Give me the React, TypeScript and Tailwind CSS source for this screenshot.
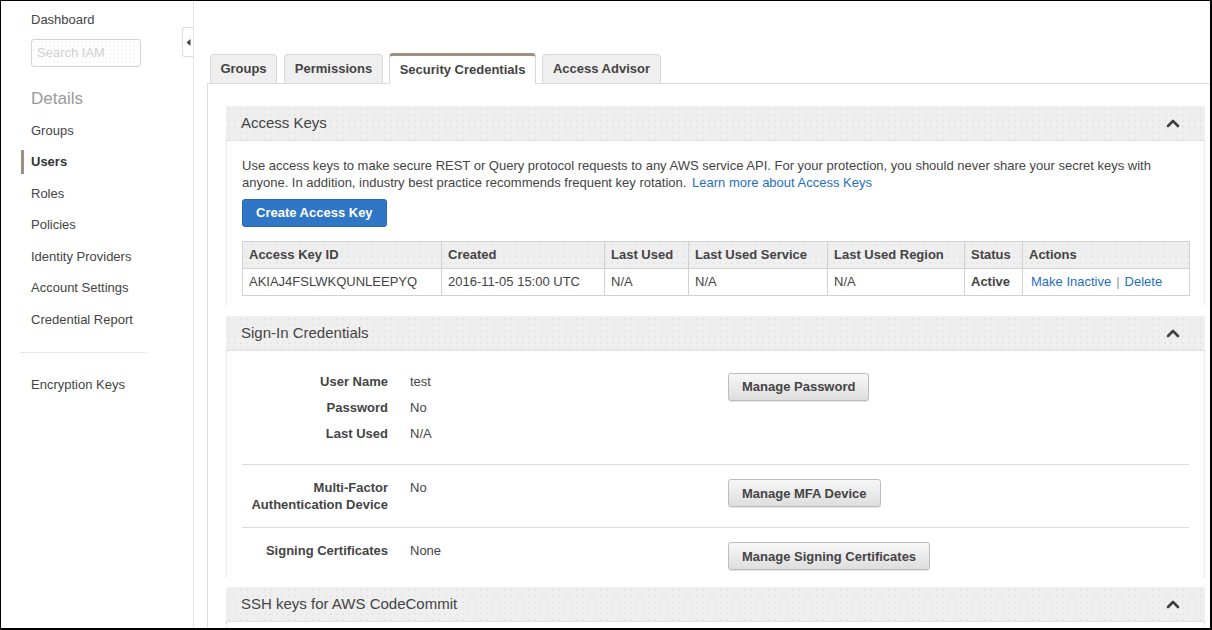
import { ReactNode } from "react";

const dots =
  "bg-[#efefef] bg-[radial-gradient(#dddddd_0.6px,transparent_0.8px)] bg-size-[6px_6px]";

const navItems = [
  "Groups",
  "Users",
  "Roles",
  "Policies",
  "Identity Providers",
  "Account Settings",
  "Credential Report",
];

function Chevron() {
  return (
    <svg width="14" height="10" viewBox="0 0 14 10" className="shrink-0">
      <polyline
        points="2,8 7,3 12,8"
        fill="none"
        stroke="#3f3f3f"
        strokeWidth="2.6"
        strokeLinecap="round"
        strokeLinejoin="round"
      />
    </svg>
  );
}

function SectionHeader({ title }: { title: string }) {
  return (
    <div
      className={`flex h-[35px] items-center justify-between border-b border-dotted border-[#d5d5d5] pl-[15px] pr-[25px] text-[15px] text-[#444] ${dots}`}
    >
      <span>{title}</span>
      <Chevron />
    </div>
  );
}

function GrayButton({ children }: { children: ReactNode }) {
  return (
    <button className="h-[28px] rounded-[3px] border border-[#bdbdbd] bg-linear-to-b from-[#f7f7f7] to-[#dedede] px-[13px] text-[13px] font-bold text-[#444] shadow-[0_1px_0_#e5e5e5]">
      {children}
    </button>
  );
}

function Sidebar() {
  return (
    <aside className="relative w-[193px] shrink-0 border-r border-[#e3e3e3] pt-[10px]">
      <div className="pl-[30px] leading-[17px]">Dashboard</div>
      <div className="mt-[11px] ml-[30px] flex h-[28px] w-[110px] items-center rounded-[3px] border border-[#d3d3d3] bg-[radial-gradient(#efefef_0.6px,transparent_0.8px)] bg-size-[4px_4px] pl-[5px] text-[#d0d0d0]">
        Search IAM
      </div>
      <div className="mt-[20px] pl-[30px] text-[17px] leading-[24px] text-[#9a9a9a]">Details</div>
      <nav className="mt-[4px] flex flex-col">
        {navItems.map((item) => (
          <div key={item} className="flex h-[31.5px] items-center">
            <span
              className={`ml-[20px] border-l-[3px] pl-[7px] leading-[24px] ${
                item === "Users" ? "border-[#a28f80] font-bold text-[#333]" : "border-transparent"
              }`}
            >
              {item}
            </span>
          </div>
        ))}
      </nav>
      <div className="mt-[16px] ml-[20px] w-[125px] border-t border-dotted border-[#d5d5d5]" />
      <div className="mt-[23px] pl-[30px] leading-[17px]">Encryption Keys</div>
      <div className="absolute top-[26px] right-0 flex h-[30px] w-[11px] items-center justify-center rounded-l-[3px] border border-r-0 border-[#dcdcdc] bg-white">
        <svg width="5" height="7" viewBox="0 0 5 7">
          <polygon points="4.5,0 0.5,3.5 4.5,7" fill="#444" />
        </svg>
      </div>
    </aside>
  );
}

function Tabs() {
  const tabs = [
    { label: "Groups", w: "w-[67px]", m: "" },
    { label: "Permissions", w: "w-[99px]", m: "ml-[7px]" },
    { label: "Security Credentials", w: "w-[147px]", m: "ml-[6px]", active: true },
    { label: "Access Advisor", w: "w-[119px]", m: "ml-[6px]" },
  ];
  return (
    <div className="flex items-end pl-[3px]">
      {tabs.map((t) =>
        t.active ? (
          <div
            key={t.label}
            className={`${t.w} ${t.m} relative -mb-px flex h-[31px] items-center justify-center rounded-t-[4px] border border-b-0 border-t-[3px] border-[#d8d8d8] border-t-[#a28f80] bg-white font-bold text-[#444]`}
          >
            {t.label}
          </div>
        ) : (
          <div
            key={t.label}
            className={`${t.w} ${t.m} flex h-[29px] items-center justify-center rounded-t-[4px] border border-b-0 border-[#d8d8d8] bg-[#efefef] font-bold text-[#444]`}
          >
            {t.label}
          </div>
        )
      )}
    </div>
  );
}

function AccessKeysTable() {
  const head = [
    "Access Key ID",
    "Created",
    "Last Used",
    "Last Used Service",
    "Last Used Region",
    "Status",
    "Actions",
  ];
  const widths = ["w-[199px]", "w-[163px]", "w-[84px]", "w-[139px]", "w-[137px]", "w-[58px]", "w-[167px]"];
  return (
    <table className="mt-[14px] w-[947px] table-fixed border-collapse">
      <colgroup>
        {widths.map((w, i) => (
          <col key={i} className={w} />
        ))}
      </colgroup>
      <thead>
        <tr className={dots}>
          {head.map((h) => (
            <th key={h} className="h-[27px] border border-[#d2d2d2] px-[6px] text-left font-bold text-[#444]">
              {h}
            </th>
          ))}
        </tr>
      </thead>
      <tbody>
        <tr>
          <td className="h-[27px] border border-[#d2d2d2] px-[6px]">AKIAJ4FSLWKQUNLEEPYQ</td>
          <td className="border border-[#d2d2d2] px-[6px]">2016-11-05 15:00 UTC</td>
          <td className="border border-[#d2d2d2] px-[6px]">N/A</td>
          <td className="border border-[#d2d2d2] px-[6px]">N/A</td>
          <td className="border border-[#d2d2d2] px-[6px]">N/A</td>
          <td className="border border-[#d2d2d2] px-[6px] font-bold">Active</td>
          <td className="border border-[#d2d2d2] px-[8px]">
            <span className="text-[#1f6fc0]">Make Inactive</span>
            <span className="mx-[5px] text-[#999]">|</span>
            <span className="text-[#1f6fc0]">Delete</span>
          </td>
        </tr>
      </tbody>
    </table>
  );
}

function InfoRow({ label, value }: { label: ReactNode; value: string }) {
  return (
    <div className="flex">
      <div className="w-[146px] text-right font-bold text-[#444]">{label}</div>
      <div className="ml-[22px]">{value}</div>
    </div>
  );
}

function SignInCredentials() {
  return (
    <div className="px-[15px]">
      <div className="flex border-b border-[#dcdcdc] pt-[18px] pb-[17px]">
        <div className="flex w-[486px] flex-col leading-[26px]">
          <InfoRow label="User Name" value="test" />
          <InfoRow label="Password" value="No" />
          <InfoRow label="Last Used" value="N/A" />
        </div>
        <div className="mt-[4px]">
          <GrayButton>Manage Password</GrayButton>
        </div>
      </div>
      <div className="flex border-b border-[#dcdcdc] pt-[14px] pb-[14px] leading-[17px]">
        <div className="w-[486px]">
          <InfoRow
            label={
              <>
                Multi-Factor
                <br />
                Authentication Device
              </>
            }
            value="No"
          />
        </div>
        <GrayButton>Manage MFA Device</GrayButton>
      </div>
      <div className="flex pt-[14px] pb-[7px] leading-[17px]">
        <div className="w-[486px]">
          <InfoRow label="Signing Certificates" value="None" />
        </div>
        <GrayButton>Manage Signing Certificates</GrayButton>
      </div>
    </div>
  );
}

export default function App() {
  return (
    <div className="flex h-[630px] w-[1212px] overflow-hidden border-t border-r-2 border-b-2 border-l border-black bg-white font-['Liberation_Sans',Arial,sans-serif] text-[13px] text-[#444]">
      <Sidebar />
      <main className="flex min-w-0 flex-1 flex-col pt-[52px] pl-[13px]">
        <Tabs />
        <div className="flex-1 border-t border-l border-[#dcdcdc] pt-[22px] pr-[5px] pl-[18px]">
          <section className="mb-[10px]">
            <SectionHeader title="Access Keys" />
            <div className="border-x border-dotted border-[#dcdcdc] px-[15px] pt-[16px] pb-[10px]">
              <p className="leading-[17px]">
                Use access keys to make secure REST or Query protocol requests to any AWS service API. For your
                protection, you should never share your secret keys with
                <br />
                anyone. In addition, industry best practice recommends frequent key rotation.{" "}
                <span className="ml-[2px] text-[#1f6fc0]">Learn more about Access Keys</span>
              </p>
              <button className="mt-[8px] h-[28px] rounded-[3px] border border-[#2a68ad] bg-[#2f76c6] px-[13px] font-bold text-white">
                Create Access Key
              </button>
              <AccessKeysTable />
            </div>
          </section>
          <section className="mb-[10px]">
            <SectionHeader title="Sign-In Credentials" />
            <div className="border-x border-dotted border-[#dcdcdc]">
              <SignInCredentials />
            </div>
          </section>
          <section>
            <SectionHeader title="SSH keys for AWS CodeCommit" />
            <div className="h-[40px] border-x border-dotted border-[#dcdcdc]" />
          </section>
        </div>
      </main>
    </div>
  );
}
